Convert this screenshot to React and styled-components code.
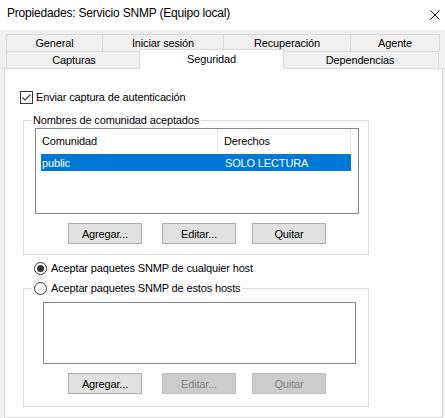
import React from 'react';
import styled, { createGlobalStyle } from 'styled-components';

const Global = createGlobalStyle`
  html, body { margin: 0; padding: 0; background: #f0f0f0; }
  body {
    font-family: "Liberation Sans", Arial, sans-serif;
    font-size: 11px;
    letter-spacing: -0.15px;
    color: #000;
  }
  #root { width: 445px; height: 418px; overflow: hidden; }
  * { box-sizing: border-box; }
`;

const Window = styled.div`
  width: 445px;
  height: 418px;
  display: flex;
  flex-direction: column;
  background: #f0f0f0;
  overflow: hidden;
`;

const TitleBar = styled.div`
  height: 30px;
  flex-shrink: 0;
  background: #fff;
  display: flex;
  align-items: flex-start;
  justify-content: space-between;
  padding: 5px 5px 0 7px;
`;

const TitleText = styled.span`
  font-size: 12px;
  line-height: 16px;
  letter-spacing: -0.2px;
`;

const CloseIcon = styled.svg`
  width: 10px;
  height: 10px;
  margin-top: 5px;
`;

const TabStrip = styled.div`
  margin: 4px 0 0 6px;
  width: 433px;
  display: flex;
  flex-direction: column;
`;

const TabRow = styled.div`
  display: flex;
  height: 17px;
`;

const Tab = styled.div`
  width: ${(p) => p.$w}px;
  height: 17px;
  flex-shrink: 0;
  border: 1px solid #d9d9d9;
  border-bottom: none;
  margin-right: -1px;
  background: #f0f0f0;
  display: flex;
  align-items: center;
  justify-content: center;
  line-height: 13px;
  position: relative;
  z-index: 1;
`;

const ActiveTab = styled(Tab)`
  width: ${(p) => p.$w + 4}px;
  height: 20px;
  margin: -2px -3px -1px -2px;
  background: #fff;
  z-index: 3;
  padding-bottom: 1px;
`;

const Panel = styled.div`
  margin-left: 4px;
  width: 439px;
  flex: 1;
  background: #fff;
  border: 1px solid #d9d9d9;
  position: relative;
  z-index: 2;
  display: flex;
  flex-direction: column;
  align-items: flex-start;
`;

const CheckRow = styled.label`
  margin: 22px 0 0 15px;
  display: flex;
  align-items: center;
  gap: 3px;
  height: 13px;
  line-height: 13px;
`;

const Box = styled.span`
  width: 13px;
  height: 13px;
  border: 1px solid #333;
  background: #fff;
  display: flex;
  align-items: center;
  justify-content: center;
  flex-shrink: 0;
`;

const Group = styled.fieldset`
  margin: ${(p) => p.$mt}px 0 0 18px;
  padding: 0;
  width: 346px;
  min-width: 0;
  border: 1px solid #dcdcdc;
`;

const Legend = styled.legend`
  margin-left: ${(p) => p.$ml}px;
  padding: 0 2px;
  line-height: 13px;
  height: 13px;
  display: flex;
  align-items: center;
  gap: 4px;
`;

const GroupBody = styled.div`
  padding: ${(p) => p.$pad};
  display: flex;
  flex-direction: column;
`;

const ListBox = styled.div`
  width: ${(p) => p.$w}px;
  height: ${(p) => p.$h}px;
  border: 1px solid #828790;
  background: #fff;
  display: flex;
  flex-direction: column;
`;

const Header = styled.div`
  display: flex;
  height: 24px;
`;

const HeaderCell = styled.div`
  width: ${(p) => p.$w}px;
  border-right: 1px solid #e5e5e5;
  padding-left: 6px;
  display: flex;
  align-items: center;
`;

const Row = styled.div`
  margin: 1px 0 0 5px;
  width: 310px;
  height: 17px;
  display: flex;
  align-items: center;
  background: ${(p) => (p.$selected ? '#0078d7' : 'transparent')};
  color: ${(p) => (p.$selected ? '#fff' : '#000')};
`;

const Cell = styled.div`
  width: ${(p) => p.$w}px;
  padding-left: ${(p) => p.$pl}px;
`;

const ButtonRow = styled.div`
  display: flex;
  margin: 9px 0 0 ${(p) => p.$ml}px;
`;

const Button = styled.div`
  width: 74px;
  height: 21px;
  margin-left: ${(p) => p.$ml || 0}px;
  border: 1px solid ${(p) => (p.$disabled ? '#bfbfbf' : '#adadad')};
  background: ${(p) => (p.$disabled ? '#cccccc' : '#e1e1e1')};
  color: ${(p) => (p.$disabled ? '#838383' : '#000')};
  display: flex;
  align-items: center;
  justify-content: center;
`;

const RadioRow = styled.label`
  margin: 7px 0 0 29px;
  display: flex;
  align-items: center;
  gap: 4px;
  height: 13px;
  line-height: 13px;
`;

const RadioCircle = styled.span`
  width: 13px;
  height: 13px;
  border-radius: 50%;
  border: 1px solid #333;
  background: #fff;
  display: flex;
  align-items: center;
  justify-content: center;
  flex-shrink: 0;
  &::after {
    content: '';
    width: 7px;
    height: 7px;
    border-radius: 50%;
    background: ${(p) => (p.$checked ? '#333' : 'transparent')};
  }
`;

const Buttons = ({ ml, disabled }) => (
  <ButtonRow $ml={ml}>
    <Button>Agregar...</Button>
    <Button $ml={20} $disabled={disabled}>Editar...</Button>
    <Button $ml={16} $disabled={disabled}>Quitar</Button>
  </ButtonRow>
);

export default function App() {
  return (
    <Window>
      <Global />
      <TitleBar>
        <TitleText>Propiedades: Servicio SNMP (Equipo local)</TitleText>
        <CloseIcon viewBox="0 0 10 10">
          <path d="M0.5 0.5 L9.5 9.5 M9.5 0.5 L0.5 9.5" stroke="#000" strokeWidth="1" fill="none" />
        </CloseIcon>
      </TitleBar>
      <TabStrip>
        <TabRow>
          <Tab $w={97}>General</Tab>
          <Tab $w={122}>Iniciar sesión</Tab>
          <Tab $w={128}>Recuperación</Tab>
          <Tab $w={90}>Agente</Tab>
        </TabRow>
        <TabRow>
          <Tab $w={136}>Capturas</Tab>
          <ActiveTab $w={141}>Seguridad</ActiveTab>
          <Tab $w={158}>Dependencias</Tab>
        </TabRow>
      </TabStrip>
      <Panel>
        <CheckRow>
          <Box>
            <svg width="11" height="11" viewBox="0 0 11 11">
              <path d="M1.5 5.5 L4 8 L9.5 2.5" stroke="#333" strokeWidth="1.1" fill="none" />
            </svg>
          </Box>
          Enviar captura de autenticación
        </CheckRow>
        <Group $mt={10}>
          <Legend $ml={7}>Nombres de comunidad aceptados</Legend>
          <GroupBody $pad="1px 0 10px 11px">
            <ListBox $w={324} $h={86}>
              <Header>
                <HeaderCell $w={182}>Comunidad</HeaderCell>
                <HeaderCell $w={133}>Derechos</HeaderCell>
              </Header>
              <Row $selected>
                <Cell $w={177} $pl={1}>public</Cell>
                <Cell $w={133} $pl={7}>SOLO LECTURA</Cell>
              </Row>
            </ListBox>
            <Buttons ml={33} />
          </GroupBody>
        </Group>
        <RadioRow>
          <RadioCircle $checked />
          Aceptar paquetes SNMP de cualquier host
        </RadioRow>
        <Group $mt={7}>
          <Legend $ml={8}>
            <RadioCircle />
            Aceptar paquetes SNMP de estos hosts
          </Legend>
          <GroupBody $pad="7px 0 12px 19px">
            <ListBox $w={313} $h={62} />
            <Buttons ml={25} disabled />
          </GroupBody>
        </Group>
      </Panel>
    </Window>
  );
}
